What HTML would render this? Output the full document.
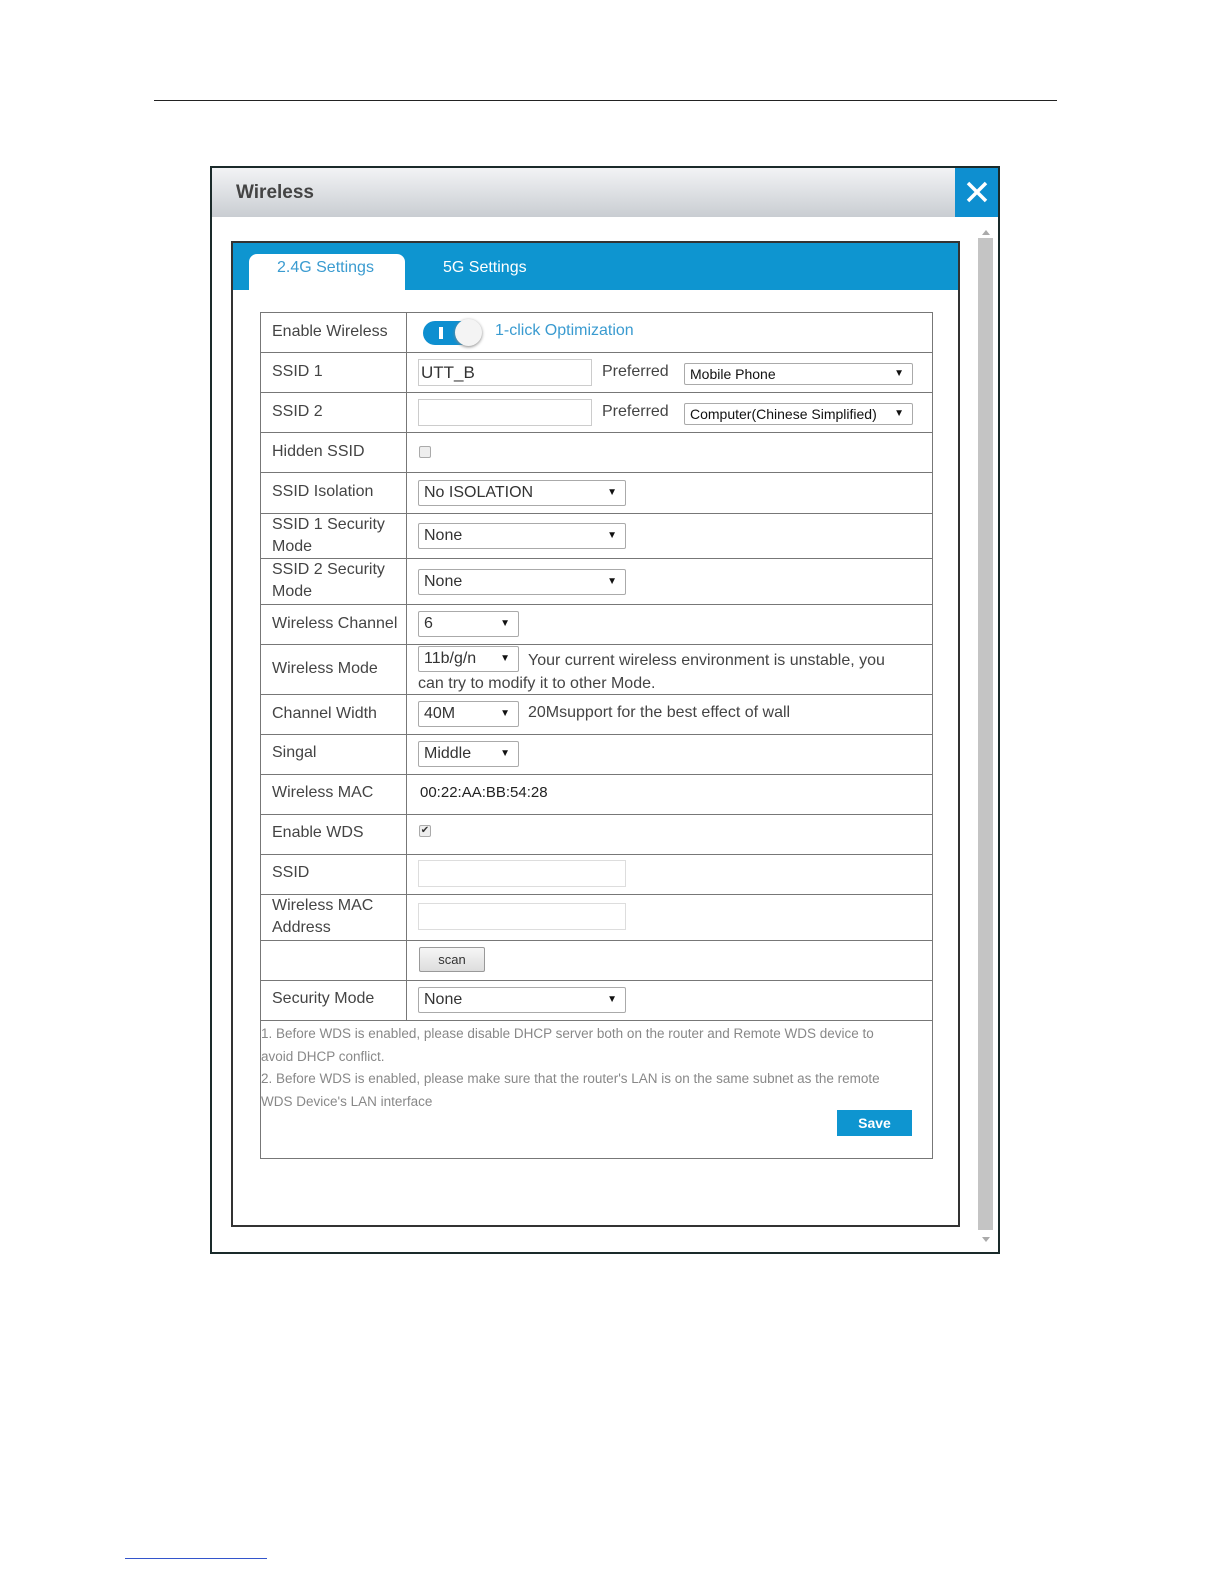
<!DOCTYPE html>
<html><head><meta charset="utf-8"><style>
body{margin:0;background:#fff;font-family:"Liberation Sans",sans-serif;}
.a{position:absolute;}
.l{position:absolute;font-size:16px;color:#444;left:272px;line-height:22px;}
.h{position:absolute;left:261px;width:671px;height:1px;background:#777;}
.sel{position:absolute;border:1px solid #aaa;background:#fff;font-size:16px;color:#333;box-sizing:border-box;padding-left:5px;line-height:24px;border-radius:2px;}
.sel:after{content:"\25BC";position:absolute;right:8px;top:0;font-size:10px;color:#111;}
.inp{position:absolute;border:1px solid #ccc;background:#fff;box-sizing:border-box;}
.t{position:absolute;font-size:16px;color:#444;}
</style></head><body>
<div class="a" style="left:154px;top:100px;width:903px;height:1px;background:#222"></div>
<div class="a" style="left:125px;top:1558px;width:142px;height:1px;background:#3355cc"></div>
<!-- dialog -->
<div class="a" style="left:210px;top:166px;width:790px;height:1088px;border:2px solid #1a2a2a;box-sizing:border-box;background:#fff"></div>
<div class="a" style="left:212px;top:168px;width:743px;height:49px;background:linear-gradient(#f2f3f5,#c9cdd2)"></div>
<div class="a" style="left:236px;top:182px;font-size:19px;font-weight:bold;color:#444">Wireless</div>
<div class="a" style="left:955px;top:168px;width:43px;height:49px;background:#0e8fd0"></div>
<svg class="a" style="left:966px;top:181px" width="22" height="22"><path d="M2 2L20 20M20 2L2 20" stroke="#fff" stroke-width="3.5"/></svg>
<!-- scrollbar -->
<div class="a" style="left:978px;top:238px;width:15px;height:992px;background:#c4c4c4"></div>
<div class="a" style="left:982px;top:226px;width:0;height:0;border:4px solid transparent;border-bottom:5px solid #aaa"></div>
<div class="a" style="left:982px;top:1237px;width:0;height:0;border:4px solid transparent;border-top:5px solid #aaa"></div>
<!-- inner panel -->
<div class="a" style="left:231px;top:241px;width:729px;height:986px;border:2px solid #333;box-sizing:border-box;"></div>
<div class="a" style="left:233px;top:243px;width:725px;height:47px;background:#0e95d0"></div>
<div class="a" style="left:249px;top:254px;width:156px;height:36px;background:#fff;border-radius:8px 8px 0 0"></div>
<div class="a" style="left:277px;top:259px;font-size:16px;color:#3a9bd0">2.4G Settings</div>
<div class="a" style="left:443px;top:259px;font-size:16px;color:#fff">5G Settings</div>
<!-- table -->
<div class="a" style="left:260px;top:312px;width:673px;height:847px;border:1px solid #777;box-sizing:border-box"></div>
<div class="a" style="left:406px;top:313px;width:1px;height:707px;background:#777"></div>
<div class="h" style="top:352px"></div><div class="h" style="top:392px"></div><div class="h" style="top:432px"></div>
<div class="h" style="top:472px"></div><div class="h" style="top:513px"></div><div class="h" style="top:558px"></div>
<div class="h" style="top:604px"></div><div class="h" style="top:644px"></div><div class="h" style="top:694px"></div>
<div class="h" style="top:734px"></div><div class="h" style="top:774px"></div><div class="h" style="top:814px"></div>
<div class="h" style="top:854px"></div><div class="h" style="top:894px"></div><div class="h" style="top:940px"></div>
<div class="h" style="top:980px"></div><div class="h" style="top:1020px"></div>
<div class="l" style="top:321px">Enable Wireless</div>
<div class="l" style="top:361px">SSID 1</div>
<div class="l" style="top:401px">SSID 2</div>
<div class="l" style="top:441px">Hidden SSID</div>
<div class="l" style="top:481px">SSID Isolation</div>
<div class="l" style="top:514px">SSID 1 Security<br>Mode</div>
<div class="l" style="top:559px">SSID 2 Security<br>Mode</div>
<div class="l" style="top:613px">Wireless Channel</div>
<div class="l" style="top:658px">Wireless Mode</div>
<div class="l" style="top:703px">Channel Width</div>
<div class="l" style="top:742px">Singal</div>
<div class="l" style="top:782px">Wireless MAC</div>
<div class="l" style="top:822px">Enable WDS</div>
<div class="l" style="top:862px">SSID</div>
<div class="l" style="top:895px">Wireless MAC<br>Address</div>
<div class="l" style="top:988px">Security Mode</div>
<!-- row content -->
<div class="a" style="left:423px;top:321px;width:58px;height:24px;border-radius:12px;background:#0e8fd0"></div>
<div class="a" style="left:439px;top:327px;width:4px;height:12px;background:#fff"></div>
<div class="a" style="left:455px;top:319px;width:27px;height:27px;border-radius:50%;background:#f4f4f4;box-shadow:0 1px 3px #888"></div>
<div class="t" style="left:495px;top:322px;color:#3a9bd0">1-click Optimization</div>
<div class="inp" style="left:418px;top:359px;width:174px;height:27px"></div>
<div class="t" style="left:421px;top:363px;color:#333;font-size:17px">UTT_B</div>
<div class="t" style="left:602px;top:363px">Preferred</div>
<div class="sel" style="left:684px;top:363px;width:229px;height:22px;font-size:14px;line-height:20px;color:#111">Mobile Phone</div>
<div class="inp" style="left:418px;top:399px;width:174px;height:27px"></div>
<div class="t" style="left:602px;top:403px">Preferred</div>
<div class="sel" style="left:684px;top:403px;width:229px;height:22px;font-size:14px;line-height:20px;color:#111">Computer(Chinese Simplified)</div>
<div class="a" style="left:419px;top:446px;width:12px;height:12px;border:1px solid #aaa;border-radius:2px;background:#eee;box-sizing:border-box"></div>
<div class="sel" style="left:418px;top:480px;width:208px;height:26px">No ISOLATION</div>
<div class="sel" style="left:418px;top:523px;width:208px;height:26px">None</div>
<div class="sel" style="left:418px;top:569px;width:208px;height:26px">None</div>
<div class="sel" style="left:418px;top:611px;width:101px;height:26px">6</div>
<div class="sel" style="left:418px;top:646px;width:101px;height:26px">11b/g/n</div>
<div class="t" style="left:528px;top:649px;line-height:24px;width:395px">Your current wireless environment is unstable, you</div>
<div class="t" style="left:418px;top:672px;line-height:24px">can try to modify it to other Mode.</div>
<div class="sel" style="left:418px;top:701px;width:101px;height:26px">40M</div>
<div class="t" style="left:528px;top:704px">20Msupport for the best effect of wall</div>
<div class="sel" style="left:418px;top:741px;width:101px;height:26px">Middle</div>
<div class="t" style="left:420px;top:784px;font-size:15px;color:#222">00:22:AA:BB:54:28</div>
<div class="a" style="left:419px;top:825px;width:12px;height:12px;border:1px solid #aaa;border-radius:2px;background:#eee;box-sizing:border-box;font-size:10px;line-height:10px;color:#333;text-align:center">✔</div>
<div class="inp" style="left:418px;top:860px;width:208px;height:27px;border-color:#ddd"></div>
<div class="inp" style="left:418px;top:903px;width:208px;height:27px;border-color:#ddd"></div>
<div class="a" style="left:419px;top:947px;width:66px;height:25px;border:1px solid #999;border-radius:2px;background:linear-gradient(#f6f6f6,#ddd);box-sizing:border-box;font-size:13px;text-align:center;line-height:23px;color:#333">scan</div>
<div class="sel" style="left:418px;top:987px;width:208px;height:26px">None</div>
<div class="a" style="left:261px;top:1023px;font-size:13.5px;color:#888;line-height:22.5px;width:670px">1. Before WDS is enabled, please disable DHCP server both on the router and Remote WDS device to<br>avoid DHCP conflict.<br>2. Before WDS is enabled, please make sure that the router's LAN is on the same subnet as the remote<br>WDS Device's LAN interface</div>
<div class="a" style="left:837px;top:1110px;width:75px;height:26px;background:#0e95d0;color:#fff;font-weight:bold;font-size:14px;text-align:center;line-height:26px">Save</div>
</body></html>
